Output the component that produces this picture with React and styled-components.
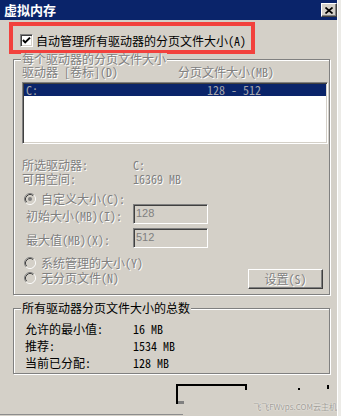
import React from 'react';
import styled, { createGlobalStyle } from 'styled-components';

const UI_FONT = '"Noto Sans Mono CJK SC", "Noto Sans CJK SC", "Liberation Mono", monospace';

const GlobalStyle = createGlobalStyle`
  body {
    margin: 0;
    background: #ecebe7;
    font-family: ${UI_FONT};
  }
`;

const Window = styled.div`
  width: 338px;
  height: 416px;
  box-sizing: border-box;
  background: #d4d0c8;
  border-right: 1px solid #fff;
  display: flex;
  flex-direction: column;
  overflow: hidden;
  font-size: 12px;
`;

const TitleBar = styled.div`
  height: 20px;
  flex-shrink: 0;
  background: #0a246a;
  display: flex;
  align-items: center;
  justify-content: space-between;
  padding-left: 4px;
`;

const Title = styled.span`
  color: #fff;
  font-family: "Noto Sans CJK SC", sans-serif;
  font-weight: bold;
  font-size: 13px;
  line-height: 20px;
`;

const CloseButton = styled.div`
  width: 16px;
  height: 14px;
  box-sizing: border-box;
  background: #d4d0c8;
  border: 1px solid;
  border-color: #fff #404040 #404040 #fff;
  box-shadow: inset -1px -1px #808080;
  display: flex;
  align-items: center;
  justify-content: center;
`;

const Highlight = styled.div`
  margin: 2px 0 0 9px;
  width: 246px;
  height: 32px;
  box-sizing: border-box;
  border: 4px solid #f2413d;
  display: flex;
  align-items: flex-start;
  gap: 3px;
  padding: 8px 0 0 7px;
`;

const CheckBox = styled.div`
  width: 13px;
  height: 13px;
  box-sizing: border-box;
  background: #fff;
  border: 1px solid;
  border-color: #808080 #fff #fff #808080;
  box-shadow: inset 1px 1px #404040, inset -1px -1px #d4d0c8;
  display: flex;
  align-items: center;
  justify-content: center;
  flex-shrink: 0;
`;

const CheckText = styled.span`
  color: #000;
  line-height: 13px;
  white-space: nowrap;
`;

const Group = styled.div`
  margin: ${p => p.$top}px 0 0 13px;
  width: 317px;
  box-sizing: border-box;
  border: 1px solid #808080;
  box-shadow: inset 1px 1px #fff, 1px 1px #fff;
  padding: 0 0 ${p => p.$bottom}px 8px;
  display: flex;
  flex-direction: column;
`;

const Legend = styled.span`
  align-self: flex-start;
  margin: -7px 0 0 -1px;
  padding: 0 1px;
  background: #d4d0c8;
  line-height: 12px;
  white-space: nowrap;
  color: ${p => (p.$disabled ? '#808080' : '#000')};
  text-shadow: ${p => (p.$disabled ? '1px 1px 0 #fff' : 'none')};
`;

const Dim = styled.span`
  color: #808080;
  text-shadow: 1px 1px 0 #fff;
  white-space: nowrap;
  line-height: 12px;
`;

const HeaderRow = styled.div`
  margin-top: 1px;
  display: flex;
  line-height: 12px;
`;

const HeaderCell = styled(Dim)`
  width: ${p => p.$w || 'auto'};
`;

const ListBox = styled.div`
  margin: 4px 1px 0 0;
  height: 62px;
  box-sizing: border-box;
  background: #fff;
  border: 1px solid;
  border-color: #808080 #fff #fff #808080;
  box-shadow: inset 1px 1px #404040, inset -1px -1px #d4d0c8;
  padding: 1px 1px 0 1px;
`;

const ListRow = styled.div`
  height: 12px;
  background: ${p => (p.$selected ? '#0a246a' : 'transparent')};
  display: flex;
  align-items: center;
  padding-left: 2px;
  font-size: 12px;
  line-height: 12px;
  color: #a4a4ac;
`;

const ListCell = styled.span`
  width: ${p => p.$w || 'auto'};
  white-space: pre;
`;

const InfoList = styled.div`
  margin-top: ${p => p.$top}px;
  display: flex;
  flex-direction: column;
`;

const InfoRow = styled.div`
  height: ${p => p.$h}px;
  display: flex;
  align-items: center;
  padding-left: ${p => p.$indent || 0}px;
  line-height: 12px;
`;

const InfoLabel = styled.span`
  width: ${p => p.$w}px;
  flex-shrink: 0;
  white-space: nowrap;
  color: ${p => (p.$disabled ? '#808080' : '#000')};
  text-shadow: ${p => (p.$disabled ? '1px 1px 0 #fff' : 'none')};
`;

const InfoValue = styled.span`
  white-space: pre;
  color: ${p => (p.$disabled ? '#808080' : '#000')};
  text-shadow: ${p => (p.$disabled ? '1px 1px 0 #fff' : 'none')};
`;

const RadioRow = styled.div`
  margin-top: ${p => p.$top || 0}px;
  height: 11px;
  display: flex;
  align-items: center;
  gap: 5px;
  padding-left: 2px;
`;

const FieldRow = styled.div`
  margin-top: ${p => p.$top || 0}px;
  height: 20px;
  display: flex;
  align-items: center;
`;

const FieldLabel = styled(Dim)`
  width: 111px;
  box-sizing: border-box;
  padding-left: 4px;
  padding-top: 3px;
`;

const SizeInput = styled.input`
  width: 75px;
  height: 20px;
  box-sizing: border-box;
  margin: 0;
  background: #d4d0c8;
  border: 1px solid;
  border-color: #808080 #fff #fff #808080;
  box-shadow: inset 1px 1px #404040, inset -1px -1px #d4d0c8;
  padding: 0 0 2px 2px;
  font-family: "Liberation Sans", sans-serif;
  font-size: 11px;
  color: #808080;
  outline: none;
`;

const ButtonRow = styled.div`
  margin-top: 1px;
  height: 20px;
  display: flex;
  align-items: flex-start;
  justify-content: space-between;
  padding-right: 6px;
`;

const SetButton = styled.button`
  width: 75px;
  height: 20px;
  box-sizing: border-box;
  margin: 0;
  padding: 0;
  background: #d4d0c8;
  border: 1px solid;
  border-color: #fff #404040 #404040 #fff;
  box-shadow: inset -1px -1px #808080;
  font-family: ${UI_FONT};
  font-size: 12px;
  line-height: 16px;
  color: #808080;
  text-shadow: 1px 1px 0 #fff;
`;

const Footer = styled.div`
  margin-top: 10px;
  height: 30px;
  display: flex;
  align-items: flex-start;
  padding-left: 176px;
`;

const GhostBox = styled.div`
  width: 75px;
  height: 20px;
  box-sizing: border-box;
  border-top: 2px solid #000;
  border-left: 2px solid #000;
  display: flex;
  justify-content: space-between;
`;

const GhostCorner = styled.span`
  align-self: flex-end;
  width: 6px;
  height: 3px;
  background: #808080;
`;

const GhostNotch = styled.span`
  width: 2px;
  height: 4px;
  background: #000;
`;

const Side = styled.div`
  margin-left: 6px;
  display: flex;
  flex-direction: column;
`;

const Dots = styled.div`
  height: 17px;
  display: flex;
  align-items: flex-start;
`;

const Dot = styled.span`
  margin: ${p => p.$top}px 0 0 ${p => p.$left}px;
  width: ${p => p.$w}px;
  height: ${p => p.$h}px;
  background: #000;
`;

const Watermark = styled.span`
  font-family: "Noto Sans CJK SC", "Liberation Sans", sans-serif;
  font-size: 8px;
  line-height: 12px;
  color: #a29e98;
  text-shadow: 0 0 2px #fff;
  white-space: nowrap;
`;

const BottomLine = styled.div`
  width: 183px;
  height: 1px;
  background: #8c8c8c;
`;

const CheckMark = () => (
  <svg width="9" height="9" viewBox="0 0 9 9">
    <path d="M1 4 L3.2 6.4 L8 1.6" fill="none" stroke="#000" strokeWidth="2" />
  </svg>
);

const CloseGlyph = () => (
  <svg width="8" height="7" viewBox="0 0 8 7">
    <path d="M0.5 0.5 L7.5 6.5 M7.5 0.5 L0.5 6.5" stroke="#000" strokeWidth="1.7" />
  </svg>
);

const Radio = ({ checked }) => (
  <svg width="12" height="12" viewBox="0 0 12 12" style={{ flexShrink: 0 }}>
    <circle cx="6" cy="6" r="5" fill="#d4d0c8" />
    <path d="M2.11 9.89 A5.5 5.5 0 0 1 9.89 2.11" fill="none" stroke="#808080" />
    <path d="M9.89 2.11 A5.5 5.5 0 0 1 2.11 9.89" fill="none" stroke="#fff" />
    <path d="M2.82 9.18 A4.5 4.5 0 0 1 9.18 2.82" fill="none" stroke="#404040" />
    <path d="M9.18 2.82 A4.5 4.5 0 0 1 2.82 9.18" fill="none" stroke="#d4d0c8" />
    {checked && <circle cx="6" cy="6" r="2" fill="#808080" />}
  </svg>
);

const totals = [
  { label: '允许的最小值:', value: '16 MB' },
  { label: '推荐:', value: '1534 MB' },
  { label: '当前已分配:', value: '128 MB' },
];

export default function App() {
  return (
    <>
      <GlobalStyle />
      <Window>
        <TitleBar>
          <Title>虚拟内存</Title>
          <CloseButton>
            <CloseGlyph />
          </CloseButton>
        </TitleBar>

        <Highlight>
          <CheckBox>
            <CheckMark />
          </CheckBox>
          <CheckText>自动管理所有驱动器的分页文件大小(A)</CheckText>
        </Highlight>

        <Group $top={5} $bottom={5}>
          <Legend $disabled>每个驱动器的分页文件大小</Legend>
          <HeaderRow>
            <HeaderCell $w="156px">驱动器 [卷标](D)</HeaderCell>
            <HeaderCell>分页文件大小(MB)</HeaderCell>
          </HeaderRow>
          <ListBox>
            <ListRow $selected>
              <ListCell $w="181px">C:</ListCell>
              <ListCell>128 - 512</ListCell>
            </ListRow>
          </ListBox>

          <InfoList $top={14}>
            <InfoRow $h={14}>
              <InfoLabel $w={111} $disabled>所选驱动器:</InfoLabel>
              <InfoValue $disabled>C:</InfoValue>
            </InfoRow>
            <InfoRow $h={14}>
              <InfoLabel $w={111} $disabled>可用空间:</InfoLabel>
              <InfoValue $disabled>16369 MB</InfoValue>
            </InfoRow>
          </InfoList>

          <RadioRow $top={7}>
            <Radio checked />
            <Dim>自定义大小(C):</Dim>
          </RadioRow>
          <FieldRow>
            <FieldLabel>初始大小(MB)(I):</FieldLabel>
            <SizeInput disabled defaultValue="128" />
          </FieldRow>
          <FieldRow $top={4}>
            <FieldLabel>最大值(MB)(X):</FieldLabel>
            <SizeInput disabled defaultValue="512" />
          </FieldRow>
          <RadioRow $top={9}>
            <Radio />
            <Dim>系统管理的大小(Y)</Dim>
          </RadioRow>
          <ButtonRow>
            <RadioRow $top={3}>
              <Radio />
              <Dim>无分页文件(N)</Dim>
            </RadioRow>
            <SetButton disabled>设置(S)</SetButton>
          </ButtonRow>
        </Group>

        <Group $top={13} $bottom={2}>
          <Legend>所有驱动器分页文件大小的总数</Legend>
          <InfoList $top={6}>
            {totals.map(t => (
              <InfoRow key={t.label} $h={17} $indent={3}>
                <InfoLabel $w={108}>{t.label}</InfoLabel>
                <InfoValue>{t.value}</InfoValue>
              </InfoRow>
            ))}
          </InfoList>
        </Group>

        <Footer>
          <GhostBox>
            <GhostCorner />
            <GhostNotch />
          </GhostBox>
          <Side>
            <Dots>
              <Dot $top={4} $left={45} $w={2} $h={2} />
              <Dot $top={1} $left={27} $w={2} $h={4} />
            </Dots>
            <Watermark>飞飞FWvps.COM云主机</Watermark>
          </Side>
        </Footer>
        <BottomLine />
      </Window>
    </>
  );
}
